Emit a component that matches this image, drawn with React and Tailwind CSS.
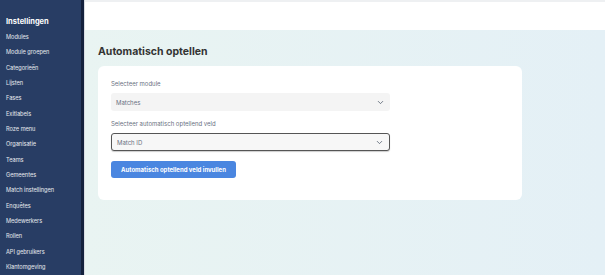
import { ChevronDown } from 'lucide-react';

const MENU = [
  'Modules', 'Module groepen', 'Categorieën', 'Lijsten', 'Fases', 'Exitlabels', 'Roze menu',
  'Organisatie', 'Teams', 'Gemeentes', 'Match instellingen', 'Enquêtes', 'Medewerkers',
  'Rollen', 'API gebruikers', 'Klantomgeving',
];

function Select({ value, outlined }) {
  return (
    <div className={`w-[279px] h-[18px] flex items-center justify-between px-[5px] rounded-[3px] text-[6px] text-gray-500 ${outlined ? 'bg-[#f7f7f7] border border-[#555] shadow-[0_1px_1px_rgba(0,0,0,0.2)]' : 'bg-[#f4f4f4]'}`}>
      <span>{value}</span>
      <ChevronDown size={9} strokeWidth={2} className="text-gray-600" />
    </div>
  );
}

export default function App() {
  return (
    <div className="w-[605px] h-[275px] flex overflow-hidden font-['Inter',sans-serif]">

      {/* sidebar */}
      <aside className="w-[81px] shrink-0 bg-[#283d64] pt-[16px] pl-[6px] text-white">
        <div className="text-[7.5px] font-bold h-[11px] leading-[11px] mb-[6px]">Instellingen</div>
        <ul>
          {MENU.map(m => (
            <li key={m} className="text-[5.6px] h-[15.35px] leading-[9px] text-white/90">{m}</li>
          ))}
        </ul>
      </aside>
      <div className="w-[3px] shrink-0 bg-[#14213d]" />
      <div className="w-[1px] shrink-0 bg-[#d9dde3]" />

      {/* main */}
      <main className="flex-1 flex flex-col">
        <header className="h-[30px] bg-white border-t-2 border-[#eef0f2]" />
        <div className="flex-1 bg-gradient-to-r from-[#e9f4f2] to-[#e4f0f6] pl-[13px] pt-[15px]">
          <h1 className="text-[10.5px] font-bold text-[#333] h-[14px] leading-[14px] mb-[7px]">Automatisch optellen</h1>

          <div className="w-[424px] h-[134px] bg-white rounded-[6px] pl-[13px] pt-[13px]">
            <div className="text-[6px] text-gray-500 mb-[5px]">Selecteer module</div>
            <Select value="Matches" />

            <div className="text-[6px] text-gray-500 mt-[8px] mb-[5px]">Selecteer automatisch optellend veld</div>
            <Select value="Match ID" outlined />

            <button className="mt-[10px] w-[125px] h-[17px] rounded-[3px] bg-[#4a86e0] text-white text-[6px] font-bold">
              Automatisch optellend veld invullen
            </button>
          </div>
        </div>
      </main>

    </div>
  );
}
